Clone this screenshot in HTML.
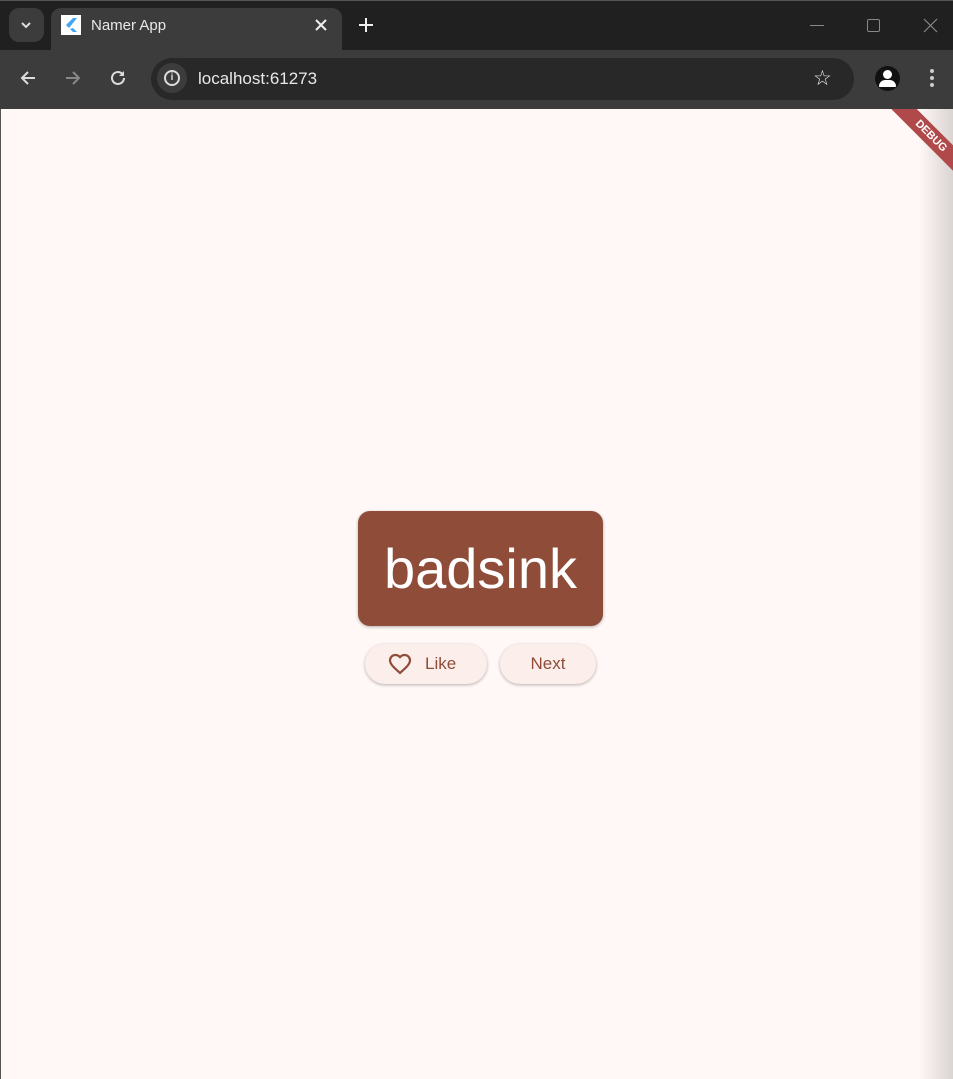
<!DOCTYPE html>
<html><head><style>
*{margin:0;padding:0;box-sizing:border-box}
body{width:953px;height:1079px;overflow:hidden;background:#fff8f6;font-family:"Liberation Sans",sans-serif;position:relative}
.top{position:absolute;left:0;top:0;width:953px;height:50px;background:#202020;border-top:1px solid #555}
.bar{position:absolute;left:0;top:50px;width:953px;height:59px;background:#3c3c3c}
.tab{position:absolute;left:51px;top:8px;width:291px;height:42px;background:#3c3c3c;border-radius:10px 10px 0 0}
.w{color:#e8e8e8;position:absolute}
.url{position:absolute;left:151px;top:58px;width:703px;height:42px;background:#282828;border-radius:21px}
.card{position:absolute;left:358px;top:511px;width:245px;height:115px;background:#8f4c38;border-radius:12px;box-shadow:0 1px 3px rgba(0,0,0,.3);color:#fff;font-size:56px;text-align:center;line-height:115px}
.btn{position:absolute;top:644px;height:40px;border-radius:20px;background:#fcefeb;box-shadow:0 1px 3px rgba(0,0,0,.3);color:#8f4c38;font-size:17px;line-height:40px}
.shade{position:absolute;right:0;top:109px;width:35px;height:970px;background:linear-gradient(90deg,rgba(0,0,0,0),rgba(0,0,0,.15))}
</style></head><body>
<div class="top"></div>
<div style="position:absolute;left:9px;top:8px;width:35px;height:34px;background:#3c3c3c;border-radius:10px"></div>
<svg style="position:absolute;left:19px;top:18px" width="14" height="14"><path d="M3 5l4 4 4-4" stroke="#ddd" stroke-width="2" fill="none"/></svg>
<div class="tab"></div>
<div style="position:absolute;left:61px;top:15px;width:20px;height:20px;background:#fff"></div>
<svg style="position:absolute;left:61px;top:15px" width="20" height="20"><path d="M12 3L5 10l3 3 8-10zM9 14l3 3h4l-4-4z" fill="#42a5f5"/></svg>
<div class="w" style="left:91px;top:17px;font-size:15px">Namer App</div>
<svg style="position:absolute;left:314px;top:18px" width="14" height="14"><path d="M2 2l10 10M12 2L2 12" stroke="#eee" stroke-width="2"/></svg>
<svg style="position:absolute;left:358px;top:17px" width="16" height="16"><path d="M8 1v14M1 8h14" stroke="#eee" stroke-width="2"/></svg>
<div class="w" style="left:810px;top:25px;width:14px;height:1px;background:#888"></div>
<div class="w" style="left:867px;top:19px;width:13px;height:13px;border:1px solid #888;border-radius:2px"></div>
<svg style="position:absolute;left:923px;top:18px" width="15" height="15"><path d="M1 1l13 13M14 1L1 14" stroke="#888" stroke-width="1.2"/></svg>
<div class="bar"></div>
<svg style="position:absolute;left:19px;top:69px" width="18" height="18"><path d="M16 9H3M9 3L3 9l6 6" stroke="#ddd" stroke-width="2" fill="none"/></svg>
<svg style="position:absolute;left:64px;top:69px" width="18" height="18"><path d="M2 9h13M9 3l6 6-6 6" stroke="#888" stroke-width="2" fill="none"/></svg>
<svg style="position:absolute;left:109px;top:69px" width="18" height="18"><path d="M15 9a6 6 0 1 1-2-4.5" stroke="#ddd" stroke-width="2" fill="none"/><path d="M15 2v5h-5z" fill="#ddd"/></svg>
<div class="url"></div>
<div style="position:absolute;left:157px;top:63px;width:30px;height:30px;border-radius:50%;background:#3c3c3c"></div>
<div style="position:absolute;left:164px;top:70px;width:16px;height:16px;border:2px solid #ddd;border-radius:50%;color:#ddd;font-size:10px;text-align:center;line-height:12px;font-weight:bold">i</div>
<div class="w" style="left:198px;top:69px;font-size:17px">localhost:61273</div>
<div class="w" style="left:813px;top:66px;font-size:21px">☆</div>
<div style="position:absolute;left:875px;top:66px;width:25px;height:25px;border-radius:50%;background:#111"></div>
<div style="position:absolute;left:883px;top:70px;width:9px;height:9px;border-radius:50%;background:#fff"></div>
<div style="position:absolute;left:879px;top:80px;width:17px;height:7px;border-radius:8px 8px 1px 1px;background:#fff"></div>
<div class="w" style="left:930px;top:69px;width:4px;height:4px;border-radius:50%;background:#ccc;box-shadow:0 7px 0 #ccc,0 14px 0 #ccc"></div>
<div class="shade"></div>
<div style="position:absolute;left:0;top:109px;width:953px;height:100px;overflow:hidden">
<div style="position:absolute;left:866px;top:18px;width:130px;height:18px;background:#b04a4a;transform:rotate(45deg);color:#fff;font-size:11px;font-weight:bold;text-align:center;line-height:18px">DEBUG</div>
</div>
<div style="position:absolute;left:0;top:109px;width:1px;height:970px;background:#555"></div>
<div class="card">badsink</div>
<div class="btn" style="left:365px;width:122px">
<svg style="position:absolute;left:22px;top:8px" width="26" height="24" viewBox="0 0 24 24"><path d="M12 21l-1.4-1.3C5.4 15 2 12 2 8.3 2 5.3 4.4 3 7.4 3c1.7 0 3.4.8 4.6 2.1C13.2 3.8 14.9 3 16.6 3 19.6 3 22 5.3 22 8.3c0 3.7-3.4 6.7-8.6 11.4z" fill="none" stroke="#8f4c38" stroke-width="2.2"/></svg>
<span style="position:absolute;left:60px">Like</span></div>
<div class="btn" style="left:500px;width:96px;text-align:center">Next</div>
</body></html>
